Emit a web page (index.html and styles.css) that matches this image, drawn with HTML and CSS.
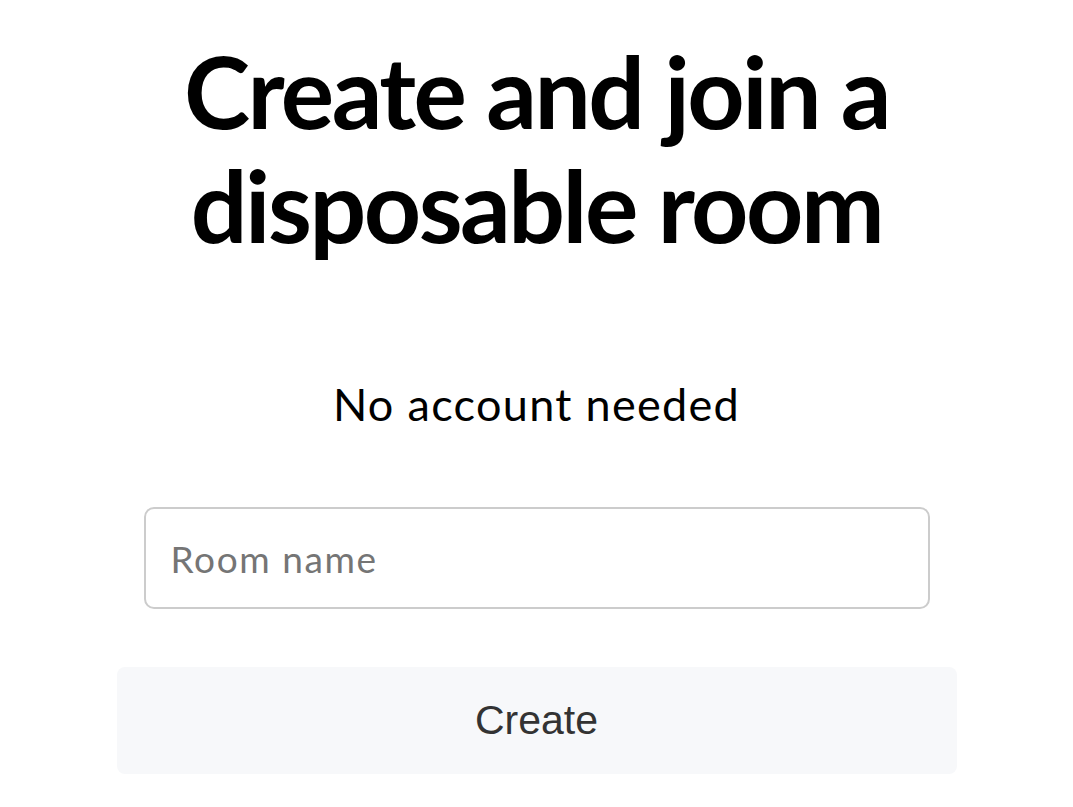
FILE: index.html
```html
<!DOCTYPE html>
<html lang="en">
<head>
<meta charset="utf-8">
<title>Create a room</title>
<link rel="stylesheet" href="styles.css">
</head>
<body>
<main class="page">
  <h1 class="title">Create and join a<br>disposable room</h1>
  <p class="subtitle">No account needed</p>
  <form class="room-form">
    <input class="room-input" type="text" placeholder="Room name">
    <button class="create-btn" type="button">Create</button>
  </form>
</main>
</body>
</html>
```

FILE: styles.css
```css
html, body {
  margin: 0;
  padding: 0;
  background: #ffffff;
}

.page {
  width: 840px;
  margin: 0 auto;
  padding-top: 33px;
  display: flex;
  flex-direction: column;
  align-items: center;
  font-family: "Lato", "Noto Sans", sans-serif;
  color: #000;
}

.title {
  margin: 0;
  text-align: center;
  white-space: nowrap;
  font-size: 100px;
  line-height: 114px;
  font-weight: 700;
  letter-spacing: -2.5px;
}

.subtitle {
  margin: 116px 0 0;
  font-size: 45px;
  line-height: 54px;
  font-weight: 400;
  letter-spacing: 1.3px;
}

.room-form {
  width: 100%;
  display: flex;
  flex-direction: column;
  align-items: center;
  margin-top: 76px;
  gap: 58px;
}

.room-input {
  box-sizing: border-box;
  width: 786px;
  height: 102px;
  border: 2px solid #cccccc;
  border-radius: 10px;
  padding: 0 25px;
  font-family: "Lato", "Noto Sans", sans-serif;
  font-size: 37px;
  letter-spacing: 1.6px;
  color: #222;
  outline: none;
}

.room-input::placeholder {
  color: #757575;
}

.create-btn {
  box-sizing: border-box;
  width: 840px;
  height: 107px;
  border: none;
  border-radius: 8px;
  background: #f7f8fa;
  font-family: "Liberation Sans", Arial, sans-serif;
  font-size: 41px;
  color: #333333;
  cursor: pointer;
}
```
